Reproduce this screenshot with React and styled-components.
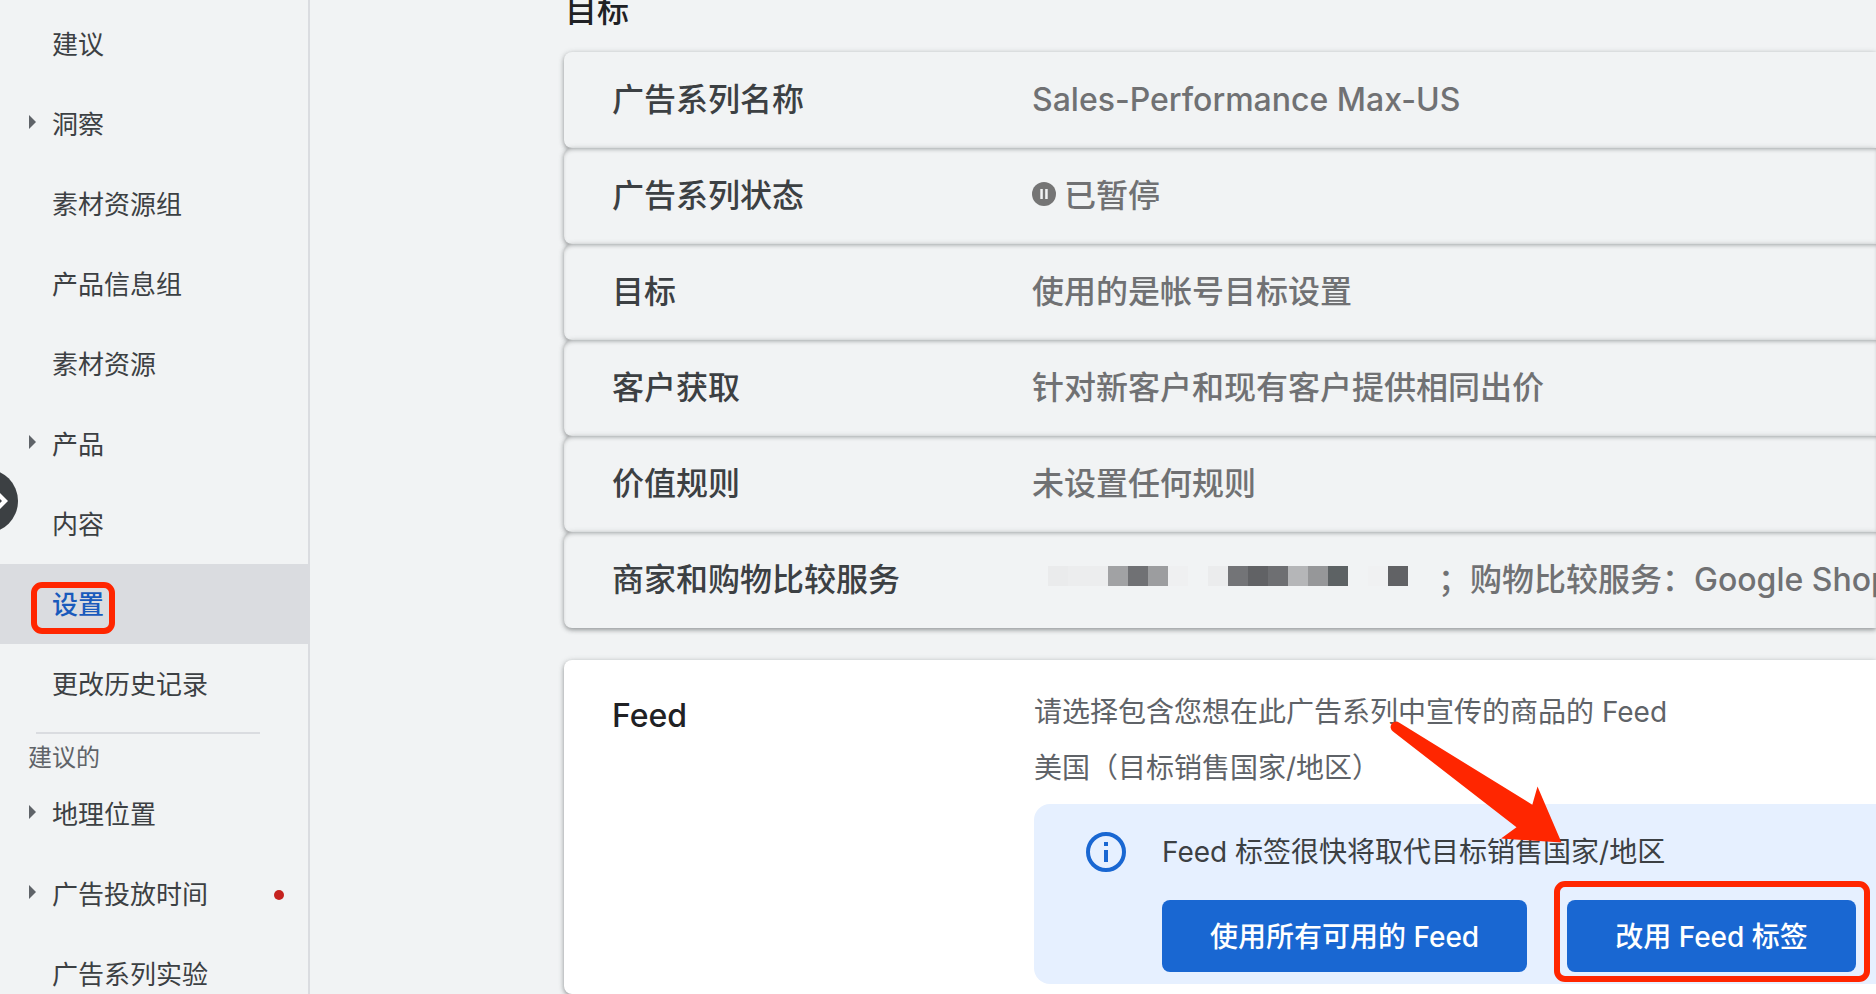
import React from "react";
import styled, { createGlobalStyle } from "styled-components";

const GlobalStyle = createGlobalStyle`
  * {
    box-sizing: border-box;
  }

  body {
    margin: 0;
    background: #f1f3f4;
    color: #3c4043;
    font-family: Inter, "Noto Sans CJK SC", sans-serif;
  }
`;

const AppStyle = styled.div`
  position: relative;
  display: flex;
  height: 100vh;
  overflow: hidden;
`;

const Sidebar = styled.nav`
  flex: 0 0 310px;
  padding-top: 4px;
  border-right: 2px solid #dadce0;
`;

const NavLink = styled.a`
  position: relative;
  display: flex;
  align-items: center;
  height: 80px;
  padding: 2px 24px 0 28px;
  background: ${(props) => (props.$active ? "#dadce0" : "transparent")};
  color: ${(props) => (props.$active ? "#185abc" : "#3c4043")};
  font-size: 26px;
  font-weight: ${(props) => (props.$active ? 500 : 400)};
  line-height: 40px;
  text-decoration: none;
`;

const ArrowSlot = styled.span`
  display: flex;
  width: 24px;
  padding: 0 0 6px 1px;
`;

const Dot = styled.span`
  width: 10px;
  height: 10px;
  margin-left: auto;
  border-radius: 50%;
  background: #c5221f;
`;

const Divider = styled.hr`
  height: 2px;
  margin: 8px 48px 0 36px;
  border: 0;
  background: #dadce0;
`;

const NavCaption = styled.div`
  padding: 8px 28px 0;
  color: #5f6368;
  font-size: 24px;
  line-height: 32px;
`;

const Expander = styled.button`
  position: absolute;
  left: -46px;
  top: 469px;
  display: flex;
  align-items: center;
  justify-content: flex-end;
  width: 64px;
  height: 64px;
  padding: 0 10px 0 0;
  border: 0;
  border-radius: 50%;
  background: #3c4043;
`;

const Main = styled.main`
  display: flex;
  flex: 1;
  flex-direction: column;
  min-width: 0;
  padding-left: 254px;
`;

const Title = styled.h1`
  flex: none;
  margin: -12px 0 18px;
  padding-left: 1px;
  color: #202124;
  font-size: 32px;
  font-weight: 500;
  line-height: 46px;
`;

const Card = styled.section`
  display: flex;
  flex: none;
  align-items: center;
  height: 96px;
  padding-left: 48px;
  border-radius: 8px 0 0 8px;
  background: #f1f3f4;
  box-shadow: 0 2px 4px rgba(60, 64, 67, 0.4), 0 1px 6px rgba(60, 64, 67, 0.2),
    inset 0 3px 4px -2px rgba(60, 64, 67, ${(props) => (props.$first ? 0 : 0.45)});
  font-size: 32px;
`;

const Label = styled.h2`
  flex: 0 0 420px;
  margin: 0;
  color: ${(props) => (props.$strong ? "#202124" : "#3c4043")};
  font-size: 32px;
  font-weight: 500;
  line-height: 48px;
`;

const Value = styled.div`
  display: flex;
  flex: 1;
  align-items: center;
  gap: 8px;
  min-width: 0;
  overflow: hidden;
  color: #707173;
  font-weight: 500;
  line-height: 48px;
  white-space: nowrap;

  > svg {
    margin-bottom: 4px;
  }
`;

const Mosaic = styled.span`
  display: flex;
  flex: none;
  margin: 0 2px 8px 16px;
`;

const Tile = styled.span`
  width: 20px;
  height: 20px;
  background: ${(props) => props.$color};
`;

const FeedCard = styled(Card)`
  flex: 1 0 auto;
  align-items: flex-start;
  height: auto;
  margin-top: 32px;
  padding-top: 24px;
  background: #fff;

  > ${Label} {
    padding-top: 8px;
  }
`;

const FeedBody = styled.div`
  position: relative;
  flex: 1;
  min-width: 0;
  margin-left: 2px;
`;

const Text = styled.p`
  margin: 0;
  color: #5f6368;
  font-size: 28px;
  line-height: 56px;
`;

const Notice = styled.div`
  display: flex;
  gap: 36px;
  margin-top: 8px;
  padding: 28px 0 12px 52px;
  border-radius: 16px 0 0 16px;
  background: #e6f0ff;
  font-size: 28px;
  line-height: 40px;
  white-space: nowrap;

  > svg {
    flex: none;
  }
`;

const Actions = styled.div`
  display: flex;
  gap: 40px;
  margin-top: 28px;
`;

const ActionSlot = styled.div`
  position: relative;
`;

const Button = styled.button`
  height: 72px;
  padding: 0 48px 2px;
  border: 0;
  border-radius: 8px;
  background: #1967d2;
  color: #fff;
  font-family: inherit;
  font-size: 28px;
  font-weight: 500;
  white-space: nowrap;
`;

// Red marks drawn on top of the page
const Highlight = styled.span`
  position: absolute;
  inset: ${(props) => props.$inset};
  border: 6px solid #ff2600;
  border-radius: 11px;
  pointer-events: none;
`;

const Pointer = styled.svg`
  position: absolute;
  left: 354px;
  top: 32px;
  pointer-events: none;
`;

const navItems = [
  { name: "建议" },
  { name: "洞察", expandable: true },
  { name: "素材资源组" },
  { name: "产品信息组" },
  { name: "素材资源" },
  { name: "产品", expandable: true },
  { name: "内容" },
  { name: "设置", active: true },
  { name: "更改历史记录" },
];

const suggestedItems = [
  { name: "地理位置", expandable: true },
  { name: "广告投放时间", expandable: true, dot: true },
  { name: "广告系列实验" },
];

const tiles = [
  "#eaebec",
  "#ecedee",
  "#ecedee",
  "#a1a2a4",
  "#707174",
  "#9c9d9f",
  "#eff0f1",
  "#f1f3f4",
  "#ebeced",
  "#737477",
  "#616265",
  "#6e6f72",
  "#b5b6b8",
  "#969799",
  "#5d6264",
  "#f1f3f4",
  "#f0f1f2",
  "#616265",
  "#f1f3f4",
];

function NavItem({ item }) {
  return (
    <NavLink
      href="#"
      $active={item.active}
      aria-current={item.active ? "page" : undefined}>
      <ArrowSlot>
        {item.expandable && (
          <svg width="7" height="14" viewBox="0 0 7 14" fill="#5f6368">
            <path d="M0 0L7 7L0 14Z" />
          </svg>
        )}
      </ArrowSlot>
      {item.name}
      {item.dot && <Dot />}
      {item.active && <Highlight $inset="18px 193px 10px 31px" />}
    </NavLink>
  );
}

function PauseIcon() {
  return (
    <svg width="24" height="24" viewBox="0 0 24 24">
      <circle cx="12" cy="12" r="12" fill="#757575" />
      <path d="M8.3 7H10.8V17H8.3ZM13.2 7H15.7V17H13.2Z" fill="#f1f3f4" />
    </svg>
  );
}

function InfoIcon() {
  return (
    <svg width="40" height="40" viewBox="0 0 40 40" fill="#1967d2">
      <circle cx="20" cy="20" r="18" fill="none" stroke="#1967d2" strokeWidth="4" />
      <path d="M18 10H22V14H18ZM18 18H22V30H18Z" />
    </svg>
  );
}

function App() {
  return (
    <AppStyle>
      <GlobalStyle />
      <Sidebar>
        {navItems.map((item) => (
          <NavItem key={item.name} item={item} />
        ))}
        <Divider />
        <NavCaption>建议的</NavCaption>
        {suggestedItems.map((item) => (
          <NavItem key={item.name} item={item} />
        ))}
      </Sidebar>
      <Expander aria-label="展开">
        <svg width="18" height="24" viewBox="0 0 18 24" fill="#fff">
          <path d="M18 12L8 2L5 5L12 12L5 19L8 22Z" />
        </svg>
      </Expander>

      <Main>
        <Title>目标</Title>
        <Card $first>
          <Label>广告系列名称</Label>
          <Value>Sales-Performance Max-US</Value>
        </Card>
        <Card>
          <Label>广告系列状态</Label>
          <Value>
            <PauseIcon />
            已暂停
          </Value>
        </Card>
        <Card>
          <Label>目标</Label>
          <Value>使用的是帐号目标设置</Value>
        </Card>
        <Card>
          <Label>客户获取</Label>
          <Value>针对新客户和现有客户提供相同出价</Value>
        </Card>
        <Card>
          <Label>价值规则</Label>
          <Value>未设置任何规则</Value>
        </Card>
        <Card>
          <Label>商家和购物比较服务</Label>
          <Value>
            <Mosaic>
              {tiles.map((color, index) => (
                <Tile key={index} $color={color} />
              ))}
            </Mosaic>
            ；购物比较服务：Google Shopping
          </Value>
        </Card>

        <FeedCard $first>
          <Label $strong>Feed</Label>
          <FeedBody>
            <Text>请选择包含您想在此广告系列中宣传的商品的 Feed</Text>
            <Text>美国（目标销售国家/地区）</Text>
            <Notice>
              <InfoIcon />
              <div>
                Feed 标签很快将取代目标销售国家/地区
                <Actions>
                  <Button>使用所有可用的 Feed</Button>
                  <ActionSlot>
                    <Button>改用 Feed 标签</Button>
                    <Highlight $inset="-19px -14px -10px -13px" />
                  </ActionSlot>
                </Actions>
              </div>
            </Notice>
            <Pointer width="180" height="130" viewBox="1388 716 180 130" fill="#ff2600">
              <path d="M1399 722.5L1532.3 804.7L1537.5 786.5L1561.5 842.5L1501 838.5L1516.5 827.3L1393 731.5A5.3 5.3 0 0 1 1399 722.5Z" />
            </Pointer>
          </FeedBody>
        </FeedCard>
      </Main>
    </AppStyle>
  );
}

export default App;
